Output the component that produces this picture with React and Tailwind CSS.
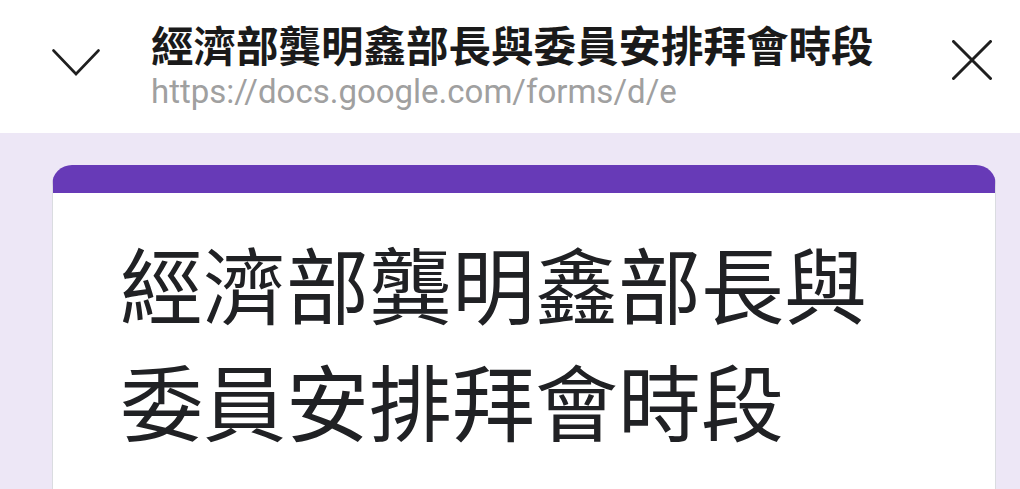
export default function App() {
  const cjk = { fontFamily: '"Noto Sans CJK TC", "Noto Sans", sans-serif' };
  return (
    <div className="w-[1020px] h-[489px] overflow-hidden bg-[#ede7f6] flex flex-col">
      <div className="h-[133px] shrink-0 bg-white flex items-start pt-[20px]">
        <svg className="ml-[52px] mt-[29px] shrink-0" width="48" height="27" viewBox="0 0 48 27" fill="none">
          <polyline points="1.5,1.5 24,25 46.5,1.5" stroke="#1f1f1f" strokeWidth="2.6" strokeLinecap="round" strokeLinejoin="miter" />
        </svg>
        <div className="ml-[51px] flex flex-col flex-1 min-w-0">
          <div className="text-[42.5px] leading-[48px] font-bold text-[#1a1a1a] whitespace-nowrap" style={cjk}>
            經濟部龔明鑫部長與委員安排拜會時段
          </div>
          <div className="mt-[5px] text-[33px] leading-[38px] text-[#a0a0a0] whitespace-nowrap" style={{ fontFamily: 'Roboto, "Liberation Sans", sans-serif' }}>
            https://docs.google.com/forms/d/e
          </div>
        </div>
        <svg className="mt-[20px] mr-[28px] shrink-0" width="40" height="40" viewBox="0 0 40 40" fill="none">
          <path d="M1.5 1.5 L38.5 38.5 M38.5 1.5 L1.5 38.5" stroke="#1f1f1f" strokeWidth="3" strokeLinecap="round" />
        </svg>
      </div>
      <div className="flex-1 pt-[32px] pl-[52px] pr-[24px]">
        <div className="h-full bg-white rounded-t-[20px] border-t-[28px] border-t-[#673ab7] border-x border-x-[#dadce0] pt-[31px] pl-[67px]">
          <div className="text-[83px] leading-[117px] text-[#202124] whitespace-nowrap" style={cjk}>
            經濟部龔明鑫部長與
            <br />
            委員安排拜會時段
          </div>
        </div>
      </div>
    </div>
  );
}
